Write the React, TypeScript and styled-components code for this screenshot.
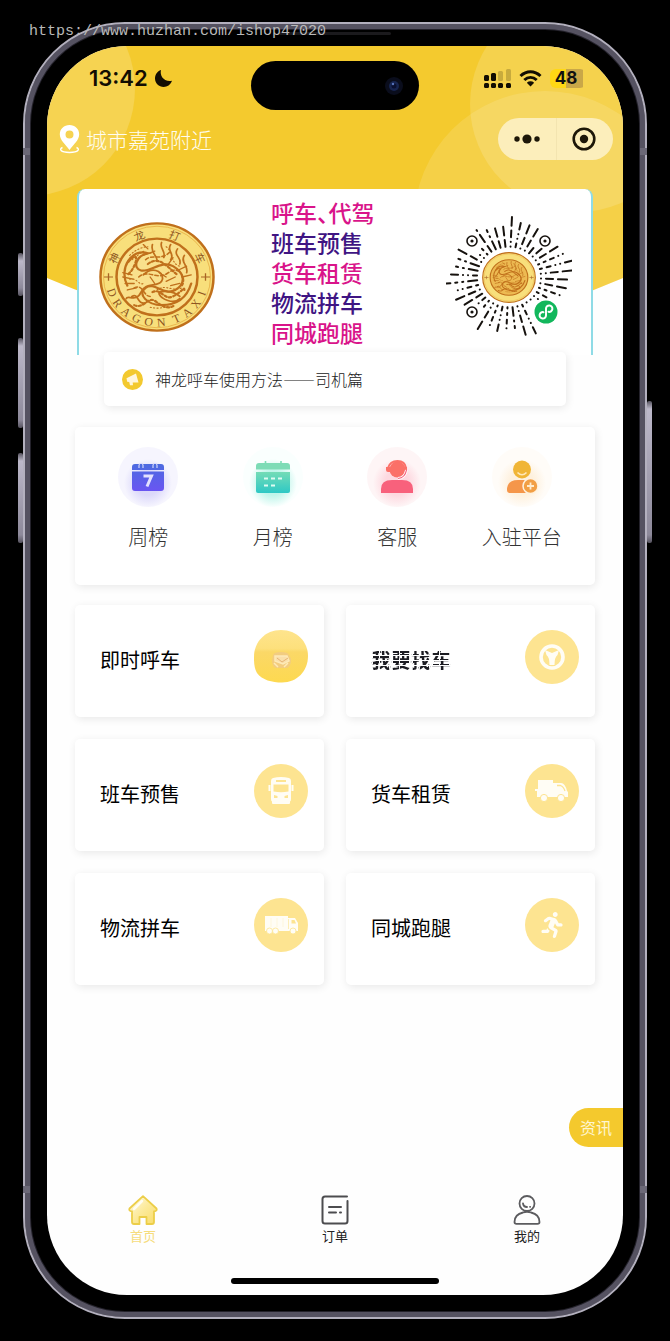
import React from "react";
import styled, { createGlobalStyle } from "styled-components";
import { FaRunning } from "react-icons/fa";

const cjk = `"Noto Sans CJK SC", "Noto Sans", sans-serif`;

const GlobalStyle = createGlobalStyle`
  * { box-sizing: border-box; }
  body { margin: 0; background: #000; font-family: ${cjk}; color: #111; }
  button { font: inherit; border: 0; padding: 0; background: none; color: inherit; cursor: pointer; }
  a { color: inherit; text-decoration: none; }
  svg { display: block; flex: none; }
`;

const Page = styled.div`
  position: relative;
  min-height: 100vh;
  padding: 22px 23px;
  display: flex;
  flex-direction: column;
  background: #000;
`;

const Watermark = styled.div`
  position: absolute;
  z-index: 5;
  left: 29px;
  top: 22px;
  font: 15px/20px "Liberation Mono", monospace;
  color: #b9b9b9;
`;

const Phone = styled.div`
  position: relative;
  flex: 1;
  display: flex;
  flex-direction: column;
  padding: 16px;
  border: 2px solid #b3b0be;
  border-radius: 102px;
  background: #000;
  box-shadow: inset 0 0 0 5px #555261, inset 0 0 0 6px #24222b;
`;

const SideButton = styled.span<{ $side: "left" | "right"; $top: number; $height: number }>`
  position: absolute;
  ${(p) => p.$side}: -7px;
  top: ${(p) => p.$top}px;
  width: 5px;
  height: ${(p) => p.$height}px;
  border-radius: 2px;
  background: linear-gradient(#56535f, #bcb8c9 8px, #8d899a calc(100% - 8px), #56535f);
`;

const AntennaBand = styled.span<{ $side: "left" | "right"; $edge: "top" | "bottom" }>`
  position: absolute;
  ${(p) => p.$side}: -2px;
  ${(p) => p.$edge}: 124px;
  width: 7px;
  height: 7px;
  background: #6b6877;
`;

const EarSpeaker = styled.span`
  position: absolute;
  left: 50%;
  top: 8px;
  width: 112px;
  height: 3px;
  margin-left: -56px;
  border-radius: 2px;
  background: #1b1a1d;
`;

const Screen = styled.main`
  position: relative;
  flex: 1;
  display: flex;
  flex-direction: column;
  margin: 6px;
  overflow: hidden;
  border-radius: 80px;
  background: #fefefe;
`;

const HeaderArt = styled.svg`
  position: absolute;
  inset: 0 0 auto;
  width: 100%;
  height: 296px;
`;

const StatusBar = styled.div`
  position: relative;
  display: grid;
  grid-template-columns: 1fr 168px 1fr;
  padding-top: 15px;
`;

const StatusGroup = styled.div<{ $end?: boolean }>`
  display: flex;
  align-items: center;
  justify-content: ${(p) => (p.$end ? "flex-end" : "flex-start")};
  gap: ${(p) => (p.$end ? 8 : 6)}px;
  height: 34px;
  padding: ${(p) => (p.$end ? "0 37px 0 0" : "0 0 0 42px")};
`;

const Clock = styled.time`
  font: 600 22px/34px Inter, sans-serif;
  color: #120d02;
`;

const Battery = styled.div`
  position: relative;
  width: 36px;
  height: 19px;
  padding-right: 4px;
  border-radius: 6px;
  background: linear-gradient(90deg, #ffd814 0 16px, #c9a748 16px 33px, transparent 33px);
  font: 700 17px/19px Inter, sans-serif;
  text-align: center;
`;

const Island = styled.div`
  display: flex;
  align-items: center;
  justify-content: flex-end;
  height: 49px;
  padding-right: 15px;
  border-radius: 25px;
  background: #000;
`;

const NavRow = styled.div`
  position: relative;
  display: flex;
  align-items: center;
  justify-content: space-between;
  margin-top: 8px;
  padding: 0 10px 0 12px;
`;

const LocationButton = styled.button`
  display: flex;
  align-items: center;
  gap: 6px;
  font-size: 21px;
  font-weight: 300;
  line-height: 32px;
  color: #fffdf0;
`;

const Capsule = styled.div`
  display: flex;
  width: 115px;
  height: 42px;
  border-radius: 21px;
  background: #fceebb;
`;

const CapsuleButton = styled.button`
  flex: 1;
  display: flex;
  align-items: center;
  justify-content: center;
  & + & { box-shadow: inset 1px 0 #f3e4b0; }
`;

const Content = styled.div`
  position: relative;
  flex: 1;
  display: flex;
  flex-direction: column;
  padding: 29px 28px 0;
`;

const Banner = styled.section`
  display: grid;
  grid-template-columns: 156px 1fr 164px;
  align-items: center;
  height: 166px;
  margin: 0 2px;
  padding-top: 10px;
  border-radius: 8px 8px 0 0;
  border: solid #8fdbe6;
  border-width: 0 2px;
  background: #fff;
`;

const BannerList = styled.ul`
  align-self: start;
  margin: 0;
  padding: 0 0 0 36px;
  list-style: none;
`;

const BannerLine = styled.li<{ $pink?: boolean }>`
  font-family: "Liberation Sans", ${cjk};
  font-size: 23px;
  font-weight: 500;
  line-height: 30px;
  white-space: nowrap;
  font-feature-settings: "halt";
  color: ${(p) => (p.$pink ? "#d9148a" : "#3f1583")};
`;

const cardShadow = `
  border-radius: 5px;
  background: #fff;
  box-shadow: 1px 2px 8px rgba(0, 0, 0, 0.09);
`;

const Notice = styled.a`
  display: flex;
  align-items: center;
  gap: 12px;
  height: 54px;
  margin: -3px 29px 0;
  padding: 0 18px;
  ${cardShadow}
  font-size: 16px;
  font-weight: 300;
  font-feature-settings: "fwid";
  color: #222;
`;

const QuickCard = styled.nav`
  display: grid;
  grid-template-columns: repeat(4, 1fr);
  margin-top: 21px;
  padding: 20px 11px 33px;
  ${cardShadow}
`;

const QuickLink = styled.a`
  display: flex;
  flex-direction: column;
  align-items: center;
  gap: 15px;
  font-size: 20px;
  font-weight: 300;
  line-height: 30px;
  color: #333;
`;

const QuickIcon = styled.span<{ $tint: string; $glow: string }>`
  display: flex;
  align-items: center;
  justify-content: center;
  width: 60px;
  height: 60px;
  border-radius: 50%;
  background: radial-gradient(circle at 50% 60%, ${(p) => p.$glow} 12px, ${(p) => p.$tint} 24px, ${(p) => p.$tint} 30px);
`;

const ServiceGrid = styled.section`
  display: grid;
  grid-template-columns: 1fr 1fr;
  gap: 22px;
  margin-top: 20px;
`;

const ServiceCard = styled.a`
  display: flex;
  align-items: flex-start;
  justify-content: space-between;
  padding: 25px 16px 27px 25px;
  ${cardShadow}
`;

const ServiceLabel = styled.span<{ $broken?: boolean }>`
  font-size: 20px;
  line-height: 60px;
  color: #000;
  ${(p) =>
    p.$broken &&
    `
    font-weight: 700;
    background: repeating-linear-gradient(90deg, #fff 0 2px, transparent 2px 8px, #fff 8px 9px, transparent 9px 18px, #fff 18px 20px),
      repeating-linear-gradient(0deg, #1c1c22 0 4px, #fff 4px 5px);
    background-clip: text;
    color: transparent;
  `}
`;

const ServiceIcon = styled.span`
  display: flex;
  align-items: center;
  justify-content: center;
  width: 54px;
  height: 54px;
  border-radius: 50%;
  background: #fde491;
  color: #fffdf5;
`;

const NewsTag = styled.button`
  position: absolute;
  right: 0;
  bottom: 148px;
  height: 39px;
  padding: 0 11px;
  border-radius: 20px 0 0 20px;
  background: #f4c92d;
  font-size: 16px;
  line-height: 39px;
  color: #fff6cf;
`;

const TabBar = styled.nav`
  display: grid;
  grid-template-columns: repeat(3, 1fr);
`;

const Tab = styled.a<{ $active?: boolean }>`
  display: flex;
  flex-direction: column;
  align-items: center;
  gap: 1px;
  font-size: 13px;
  line-height: 20px;
  color: ${(p) => (p.$active ? "#f6dc7c" : "#222")};
`;

const HomeIndicator = styled.div`
  align-self: center;
  width: 36%;
  height: 6px;
  margin: 32px 0 11px;
  border-radius: 3px;
  background: #000;
`;

const MoonIcon = () => (
  <svg width="19" height="19" viewBox="0 0 19 19">
    <path d="M7 1C5.500 6.500 10 13.500 18 11.800C16.400 16 13.300 18 9.700 18C4.800 18 1 14.200 1 9.600C1 5.700 3.300 2.300 7 1Z" fill="#120d02" />
  </svg>
);

const SignalIcon = () => (
  <svg width="27" height="19" viewBox="0 0 27 19" fill="#120d02">
    {[0, 7, 14, 22].map((x) => (
      <rect key={x} x={x} y="14" width="5" height="5" rx="1.500" />
    ))}
    <rect x="0" y="6" width="5" height="6" rx="1.500" />
    <rect x="7" y="4" width="5" height="8" rx="1.500" />
    <rect x="14" y="2" width="5" height="10" rx="1.500" opacity=".2" />
    <rect x="22" y="0" width="5" height="12" rx="1.500" opacity=".2" />
  </svg>
);

const WifiIcon = () => (
  <svg width="23" height="17" viewBox="0 0 23 17" fill="none" stroke="#120d02" strokeWidth="3">
    <path d="M1.500 6C7.500 0.400 15.500 0.400 21.500 6" />
    <path d="M5.300 10C9 6.600 14 6.600 17.700 10" />
    <path d="M11.500 16.500L7.800 12.800Q11.500 9.900 15.200 12.800Z" fill="#120d02" stroke="none" />
  </svg>
);

const PinIcon = () => (
  <svg width="21" height="29" viewBox="0 0 21 29">
    <path d="M3.500 22.500C0 24 1 27.500 10.500 27.500S21 24 17.500 22.500" fill="none" stroke="#fff" strokeWidth="1.400" />
    <path fillRule="evenodd" d="M10.500 0C5 0 .8 4 .8 9.300C.8 15 6 19 10.500 25C15 19 20.200 15 20.200 9.300C20.200 4 16 0 10.500 0ZM10.500 5.500A4 4 0 1 1 10.500 13.500A4 4 0 1 1 10.500 5.500Z" fill="#fff" />
  </svg>
);

const DragonArt = () => (
  <g fill="none" stroke="#c0701c" strokeLinecap="round" transform="scale(1.14)">
    <path strokeWidth="2" d="M-26 8C-34-8-22-27-8-22C-18-20-22-8-14-6S4-16 14-10S26 6 16 12S-2 4-10 10S-8 26 4 26S26 20 30 6" />
    <path strokeWidth="1.600" d="M-12-2C-2-12 8-2 4 4S-10 4-14 14S-26 16-27 20M-22 18C-16 14-18 26-10 24M20 20C14 26 4 20 2 16S14 12 20 18" />
    <path strokeWidth="1.500" d="M-4-30C-6-22 0-20 0-16M4-32C2-26 8-24 6-18M12-30C8-24 16-22 12-16M18-26C14-20 22-18 20-12M24-20C20-14 28-10 26-4" />
    <path strokeWidth="1.200" d="M-12-30L-8-26M-2-24L-12-20M10-12L14-18M18-6L26-10M22 0L30-2M-30-4L-22-2M-30 0L-21 2M-28 6L-20 6M-26 12L-18 10M-6 0L-2 6M2-4L8 0M8 4L16 0M12 8L20 6" />
    <path strokeWidth="2" strokeDasharray="2 2" d="M-25-14C-14-28-18-8-26-2M-4 14C4 10 6 22 14 18S24 8 24 12M-8-12C2-20 8-10 18-2M-20 26C-12 30-8 18-2 22S8 31 16 26" />
    <path strokeWidth="1.400" strokeDasharray="3 2" d="M-16 0C-8-8 0 4 10-4S26 2 22 8M-20 10C-12 6-12 18-6 18M-10-16C-4-22 4-14 12-24" />
    <path strokeWidth="1" strokeDasharray="1 2" d="M-24-20C-18-26-12-28-8-28M-22-16C-16-20-14-24-10-24M-24 2C-18 0-16 8-12 6M0 12C8 6 12 14 22 10M-6 28C2 30 10 28 14 24M8-28C14-24 12-12 20-10" />
  </g>
);

const sealChars: [string, number][] = [["神", -65], ["龙", -22], ["打", 22], ["车", 65]];

const Seal = ({ width, height, small }: { width: number; height: number; small?: boolean }) => (
  <svg width={width} height={height} viewBox="-58 -58 116 116" preserveAspectRatio="none" role="img" aria-label="神龙打车">
    <circle r="56.500" fill="#f8df7b" stroke="#c0701c" strokeWidth="2.500" />
    <circle r="53.500" fill="none" stroke="#e9b64c" strokeWidth="1" />
    <circle r="40.500" fill={small ? "#edba52" : "#f9e08c"} stroke="#c0701c" strokeWidth="2.500" />
    <DragonArt />
    <path d="M-53 0H-44M-48.500-4V4M44 0H53M48.500-4V4" stroke="#a96424" strokeWidth="1.300" />
    {!small && (
      <g fill="#8f5520" fontFamily={cjk}>
        {sealChars.map(([c, a]) => (
          <text key={c} transform={`rotate(${a})`} y="-43" fontSize="11" textAnchor="middle">{c}</text>
        ))}
        {"DRAGONTAXI".split("").map((c, i) => (
          <text key={i} transform={`rotate(${70 - i * 15 - (i > 5 ? 4 : 0)})`} y="52" fontSize="12" fontFamily="Liberation Serif, serif" textAnchor="middle">{c}</text>
        ))}
      </g>
    )}
  </svg>
);

const SealSlot = styled.div`
  display: flex;
  justify-content: center;
`;

const CodeSlot = styled.div`
  display: grid;
  place-items: center;
  & > svg { grid-area: 1 / 1; }
`;

const markers = [[-37, -36], [36, -36], [-37, 35]];

const MiniCode = () => {
  const dashes: React.ReactElement[] = [];
  for (let i = 0; i < 40; i++) {
    const a = ((i + 0.3) / 40) * Math.PI * 2;
    let r = 32;
    let k = (i * 7) % 5;
    const end = 55 + ((i * 5) % 6);
    while (r < end) {
      const len = [0, 4, 1, 7, 0, 2, 9][(k * 3 + i * i) % 7];
      const x = Math.cos(a);
      const y = Math.sin(a) * 0.95;
      const m = r + len / 2;
      const near = markers.some(([mx, my]) => Math.hypot(mx - x * m, my - y * m) < 10);
      const inBadge = Math.hypot(37 - x * m, 36 - y * m) < 16;
      if (!near && !inBadge)
        dashes.push(<line key={`${i}-${r}`} x1={x * r} y1={y * r} x2={x * (r + len + 0.1)} y2={y * (r + len + 0.1)} />);
      r += len + 5;
      k++;
    }
  }
  return (
    <CodeSlot>
      <svg width="126" height="126" viewBox="-63 -63 126 126" role="img" aria-label="小程序码">
        <g stroke="#16120e" strokeWidth="2" strokeLinecap="round">{dashes}</g>
        {markers.map(([x, y]) => (
          <g key={`${x}${y}`}>
            <circle cx={x} cy={y} r="5" fill="none" stroke="#16120e" strokeWidth="1.600" />
            <circle cx={x} cy={y} r="1.600" fill="#16120e" />
          </g>
        ))}
        <circle cx="37" cy="35" r="11.500" fill="#12b75c" />
        <path d="M34.500 35.200A3.200 3.200 0 1 0 37 38.300V31.700A3.200 3.200 0 1 1 39.500 34.800" fill="none" stroke="#fff" strokeWidth="2" strokeLinecap="round" />
      </svg>
      <Seal width={54} height={51} small />
    </CodeSlot>
  );
};

const HornIcon = () => (
  <svg width="21" height="21" viewBox="0 0 21 21">
    <circle cx="10.500" cy="10.500" r="10.500" fill="#f3c92f" />
    <path d="M4.500 9.300L14 4.500L16.500 13.500L10.700 13.400L11 16.200H8L7.200 13L5.200 12.700Z" fill="#fff6dc" />
  </svg>
);

const WeekIcon = () => (
  <svg width="32" height="30" viewBox="0 0 32 30">
    <defs>
      <linearGradient id="week" x1="0" y1="0" x2="0" y2="1">
        <stop offset="0" stopColor="#4c6be0" />
        <stop offset="1" stopColor="#6a55f2" />
      </linearGradient>
    </defs>
    <path d="M3 2H29Q32 2 32 5V8H0V5Q0 2 3 2ZM0 9.500H32V26Q32 29 29 29H3Q0 29 0 26Z" fill="url(#week)" />
    <path d="M7 6V2.500Q9 -.5 11 2.500V6M21 6V2.500Q23 -.5 25 2.500V6" fill="#4c6be0" stroke="#eceaff" strokeWidth="1" />
    <path d="M11.500 14H19.500L15 24.500" fill="none" stroke="#e4e1ff" strokeWidth="3" />
  </svg>
);

const MonthIcon = () => (
  <svg width="34" height="34" viewBox="0 0 34 34">
    <defs>
      <linearGradient id="month" x1="0" y1="0" x2="0" y2="1">
        <stop offset="0" stopColor="#74dcb6" />
        <stop offset="1" stopColor="#2ec8c5" />
      </linearGradient>
    </defs>
    <path d="M3 3H31Q34 3 34 6V9.500H0V6Q0 3 3 3Z" fill="#7ddcb6" />
    <path d="M9.500 1V5M25 1V5" stroke="#7ddcb6" strokeWidth="1.600" />
    <path d="M0 12H34V31Q34 33 32 33H2Q0 33 0 31Z" fill="url(#month)" />
    <path d="M8 18.500H12M15 18.500H19M22 18.500H26M8 25.500H12M15 25.500H19" stroke="#dffbf2" strokeWidth="2" />
  </svg>
);

const SupportIcon = () => (
  <svg width="32" height="34" viewBox="0 0 32 34">
    <path d="M0 33V29Q0 20 11 20H21Q32 20 32 29V33Z" fill="#f8617c" />
    <circle cx="16.500" cy="9.500" r="8" fill="#fb7068" />
    <path d="M7 8Q9 1 16.500 1T25 8V12" fill="none" stroke="#fb7068" strokeWidth="2" />
    <path d="M5 7H9V12H7Q5 12 5 10ZM23 7H26V10Q26 12 24 12" fill="#fb7068" />
    <path d="M25.500 10Q24 18 17 18.500" fill="none" stroke="#fff" strokeWidth="2.800" />
    <path d="M25.500 10Q24 18 17 18.500" fill="none" stroke="#f8617c" strokeWidth="1.200" />
  </svg>
);

const JoinIcon = () => (
  <svg width="32" height="34" viewBox="0 0 32 34">
    <circle cx="16" cy="9.500" r="9" fill="#f0b536" />
    <path d="M11.500 12.500Q16 17 20.500 12.500" fill="none" stroke="#ffe8b8" strokeWidth="1.600" />
    <path d="M1 30Q1 20 12 20H19Q15 27 20 33H4Q1 33 1 30Z" fill="#f5964a" />
    <circle cx="24.500" cy="26" r="7.500" fill="#f29f45" stroke="#fff2df" strokeWidth="1.500" />
    <path d="M24.500 22.500V29.500M21 26H28" stroke="#ffeccf" strokeWidth="1.800" />
  </svg>
);

const TaxiIcon = () => (
  <svg width="54" height="54" viewBox="0 0 54 54">
    <defs>
      <linearGradient id="taxi" x1="0" y1="0" x2="0" y2="1">
        <stop offset="0" stopColor="#fee48d" />
        <stop offset=".35" stopColor="#fde07c" />
        <stop offset=".42" stopColor="#fbd867" />
        <stop offset="1" stopColor="#fdd950" />
      </linearGradient>
    </defs>
    <rect width="54" height="54" fill="#fff" />
    <path d="M27 0C43 0 54 12 54 26C54 41 43 52.500 28 52.500C18 52.500 8 50 3 43C0 38 0 32 0 27C0 12 11 0 27 0Z" fill="url(#taxi)" />
    <g opacity=".75">
      <path d="M19 25Q20 22 27 22T35 25L37 29Q37 37 33 38H22Q18 37 18 30Z" fill="#f0c98a" />
      <path d="M21 26H33L35 31L29 34L21 31ZM20 33L24 37M34 33L30 37" fill="#fae3c4" stroke="#fff0d4" strokeWidth="1.500" />
      <path d="M23 28L28 32L34 28" fill="none" stroke="#dfa77d" />
    </g>
  </svg>
);

const WheelIcon = () => (
  <svg width="26" height="26" viewBox="0 0 26 26">
    <circle cx="13" cy="13" r="11" fill="none" stroke="#fffdf5" strokeWidth="3.600" />
    <path d="M6 6L13 9L20 6L18.500 11Q15.500 13 15.500 21H10.500Q10.500 13 7.500 11Z" fill="#fffdf5" />
    <path d="M10 5.500Q13 4.300 16 5.500L13 7.500Z" fill="#fde491" />
  </svg>
);

const BusIcon = () => (
  <svg width="28" height="28" viewBox="0 0 28 28">
    <path fillRule="evenodd" fill="#fffdf5" d="M6 1Q14-1 22 1Q24 1.500 24 4V22Q24 24 23 24.500V26Q23 27 22 27H6Q5 27 5 26V24.500Q4 24 4 22V4Q4 1.500 6 1ZM9 3V5H19V3ZM6.500 7.500V14.500Q14 16 21.500 14.500V7.500ZM7 18V21H10.500V19ZM21 18L17.500 19V21H21Z" />
    <path d="M2.500 8V14M25.500 8V14" stroke="#fffdf5" strokeWidth="2" />
  </svg>
);

const VanIcon = () => (
  <svg width="34" height="24" viewBox="0 0 34 24">
    <path fill="#fffdf5" d="M3 1H18V4H26Q30 4 32 12L33 13V18H2V12H0V10H3Z" />
    <path d="M22 6.500H25.500Q28.500 7.500 30 12" fill="none" stroke="#fde491" strokeWidth="1.300" />
    <circle cx="9" cy="19" r="3.600" fill="#fffdf5" stroke="#fde491" strokeWidth="1" />
    <circle cx="26" cy="19" r="3.600" fill="#fffdf5" stroke="#fde491" strokeWidth="1" />
  </svg>
);

const LorryIcon = () => (
  <svg width="35" height="20" viewBox="0 0 35 20">
    <path fill="#fffdf5" d="M1 1H24V3H31L34 8V16H1Z" />
    <path d="M27.500 5H30.500L32 8.500H27.500Z" fill="#fde491" />
    <path d="M7 3V12M13 3V12M19 3V12" stroke="#fef7dd" />
    <path d="M24.500 4V14" stroke="#fdeeb8" />
    {[5.5, 11.5, 29].map((x) => (
      <circle key={x} cx={x} cy="16" r="3" fill="#fffdf5" stroke="#fde491" strokeWidth=".8" />
    ))}
  </svg>
);

const HomeIcon = () => (
  <svg width="30" height="30" viewBox="0 0 30 30">
    <defs>
      <linearGradient id="home" x1="0" y1="0" x2="1" y2="1">
        <stop offset="0" stopColor="#fffbe6" />
        <stop offset=".5" stopColor="#fcea9b" />
        <stop offset="1" stopColor="#f9dc69" />
      </linearGradient>
    </defs>
    <path d="M15 1.200L28.500 13.500Q29.500 16 26 16.500V27Q26 29 24 29H18.500V22H11.500V29H6Q4 29 4 27V16.500Q.5 16 1.500 13.500Z" fill="url(#home)" stroke="#ecce49" strokeWidth="1.800" strokeLinejoin="round" />
    <path d="M6 14L14 6" stroke="#fffdf2" strokeWidth="2.500" strokeLinecap="round" />
  </svg>
);

const OrderIcon = () => (
  <svg width="28" height="30" viewBox="0 0 28 30" fill="none" stroke="#4c4c4f" strokeWidth="2" strokeLinecap="round">
    <path d="M26 1.500H4Q1.500 1.500 1.500 4V26Q1.500 28.500 4 28.500H24Q26.500 28.500 26.500 26V6" />
    <path d="M8 12H20M8 17.500H15M19 17.500H20" />
  </svg>
);

const MeIcon = () => (
  <svg width="28" height="30" viewBox="0 0 28 30" fill="none" stroke="#5c5c5f" strokeWidth="1.800" strokeLinecap="round">
    <circle cx="14" cy="8.500" r="7.500" />
    <path d="M10 8.500Q10.500 12 14 12M17 11.800H17.200" />
    <path d="M10 17.500Q1.500 19.500 1.500 27Q1.500 28.800 3.500 28.800H24.500Q26.500 28.800 26.500 27Q26.500 19.500 18 17.500Q14 16 10 17.500Z" />
  </svg>
);

const bannerLines = ["呼车、代驾", "班车预售", "货车租赁", "物流拼车", "同城跑腿"];

const quickLinks = [
  { label: "周榜", icon: <WeekIcon />, tint: "#f6f5fe", glow: "#dcd9fa" },
  { label: "月榜", icon: <MonthIcon />, tint: "#fafffe", glow: "#bff5ea" },
  { label: "客服", icon: <SupportIcon />, tint: "#fef5f6", glow: "#fdd9e0" },
  { label: "入驻平台", icon: <JoinIcon />, tint: "#fffcf8", glow: "#fef1de" },
];

const services = [
  { label: "即时呼车", icon: <TaxiIcon /> },
  { label: "我要找车", icon: <WheelIcon />, broken: true },
  { label: "班车预售", icon: <BusIcon /> },
  { label: "货车租赁", icon: <VanIcon /> },
  { label: "物流拼车", icon: <LorryIcon /> },
  { label: "同城跑腿", icon: <FaRunning size={26} /> },
];

export default function App() {
  return (
    <Page lang="zh-CN">
      <GlobalStyle />
      <Watermark>https://www.huzhan.com/ishop47020</Watermark>
      <Phone>
        <SideButton $side="left" $top={229} $height={43} />
        <SideButton $side="left" $top={314} $height={90} />
        <SideButton $side="left" $top={429} $height={90} />
        <SideButton $side="right" $top={377} $height={142} />
        <AntennaBand $side="left" $edge="top" />
        <AntennaBand $side="right" $edge="top" />
        <AntennaBand $side="left" $edge="bottom" />
        <AntennaBand $side="right" $edge="bottom" />
        <EarSpeaker />
        <Screen>
          <HeaderArt viewBox="0 0 576 296" preserveAspectRatio="none" aria-hidden="true">
            <defs>
              <clipPath id="curve">
                <path d="M0 0H576V232Q288 356 0 232Z" />
              </clipPath>
            </defs>
            <g clipPath="url(#curve)">
              <rect width="576" height="296" fill="#f4ca2e" />
              <circle cx="-19" cy="43" r="107" fill="#fff" opacity=".17" />
              <circle cx="531" cy="58" r="108" fill="#fff" opacity=".15" />
              <circle cx="498" cy="176" r="131" fill="#fff" opacity=".12" />
            </g>
          </HeaderArt>
          <StatusBar>
            <StatusGroup>
              <Clock>13:42</Clock>
              <MoonIcon />
            </StatusGroup>
            <Island>
              <svg width="20" height="20" viewBox="0 0 20 20">
                <circle cx="10" cy="10" r="9" fill="#0a0d1c" />
                <circle cx="10" cy="10" r="5" fill="#17244f" />
                <circle cx="10" cy="10" r="2.500" fill="#0a1030" />
                <circle cx="9" cy="8" r="1.200" fill="#5873bb" />
              </svg>
            </Island>
            <StatusGroup $end>
              <SignalIcon />
              <WifiIcon />
              <Battery>48</Battery>
            </StatusGroup>
          </StatusBar>
          <NavRow>
            <LocationButton>
              <PinIcon />
              城市嘉苑附近
            </LocationButton>
            <Capsule>
              <CapsuleButton aria-label="更多">
                <svg width="26" height="10" viewBox="0 0 26 10" fill="#1d1708">
                  <circle cx="3" cy="5" r="2.700" />
                  <circle cx="13" cy="5" r="4.600" />
                  <circle cx="23" cy="5" r="2.700" />
                </svg>
              </CapsuleButton>
              <CapsuleButton aria-label="关闭">
                <svg width="24" height="24" viewBox="0 0 24 24">
                  <circle cx="12" cy="12" r="10.300" fill="none" stroke="#1d1708" strokeWidth="2.600" />
                  <circle cx="12" cy="12" r="4.200" fill="#1d1708" />
                </svg>
              </CapsuleButton>
            </Capsule>
          </NavRow>
          <Content>
            <Banner>
              <SealSlot>
                <Seal width={116} height={110} />
              </SealSlot>
              <BannerList>
                {bannerLines.map((line, i) => (
                  <BannerLine key={line} $pink={i % 2 === 0}>{line}</BannerLine>
                ))}
              </BannerList>
              <MiniCode />
            </Banner>
            <Notice href="#notice">
              <HornIcon />
              神龙呼车使用方法——司机篇
            </Notice>
            <QuickCard>
              {quickLinks.map((q) => (
                <QuickLink key={q.label} href="#quick">
                  <QuickIcon $tint={q.tint} $glow={q.glow}>{q.icon}</QuickIcon>
                  {q.label}
                </QuickLink>
              ))}
            </QuickCard>
            <ServiceGrid>
              {services.map((s) => (
                <ServiceCard key={s.label} href="#service">
                  <ServiceLabel $broken={s.broken}>{s.label}</ServiceLabel>
                  <ServiceIcon>{s.icon}</ServiceIcon>
                </ServiceCard>
              ))}
            </ServiceGrid>
          </Content>
          <NewsTag>资讯</NewsTag>
          <TabBar>
            <Tab href="#home" $active>
              <HomeIcon />
              首页
            </Tab>
            <Tab href="#orders">
              <OrderIcon />
              订单
            </Tab>
            <Tab href="#me">
              <MeIcon />
              我的
            </Tab>
          </TabBar>
          <HomeIndicator />
        </Screen>
      </Phone>
    </Page>
  );
}
